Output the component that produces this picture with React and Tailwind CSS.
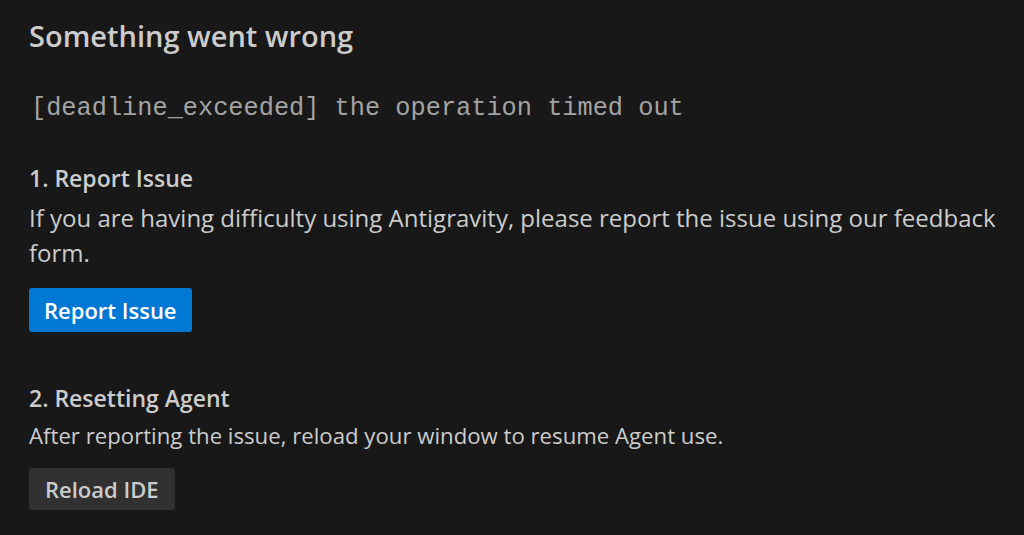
import React from "react";

export default function App() {
  return (
    <div className="min-h-[535px] w-full bg-[#181818] pl-[29px] pr-[20px] pt-[18px] font-['Open_Sans',sans-serif] text-[#cccccc]">
      <h1 className="text-[29px] font-semibold leading-[36px]">Something went wrong</h1>
      <p className="mt-[39px] pl-[2px] font-['Liberation_Mono',monospace] text-[25.3px] leading-[32px] text-[#a3a3a3]">
        [deadline_exceeded] the operation timed out
      </p>

      <h2 className="mt-[39px] text-[23px] font-semibold leading-[28px]">1. Report Issue</h2>
      <p className="mt-[8px] text-[24px] leading-[35px]">
        If you are having difficulty using Antigravity, please report the issue using our feedback form.
      </p>
      <button className="mt-[18px] rounded-[3px] bg-[#0078d4] px-[15px] py-[7px] text-[22px] font-semibold leading-[30px] text-white">
        Report Issue
      </button>

      <h2 className="mt-[52px] text-[23px] font-semibold leading-[28px]">2. Resetting Agent</h2>
      <p className="mt-[10px] text-[22.2px] leading-[28px]">
        After reporting the issue, reload your window to resume Agent use.
      </p>
      <button className="mt-[18px] rounded-[3px] bg-[#313131] px-[16px] py-[7px] text-[22px] font-semibold leading-[28px] text-[#cccccc]">
        Reload IDE
      </button>
    </div>
  );
}
